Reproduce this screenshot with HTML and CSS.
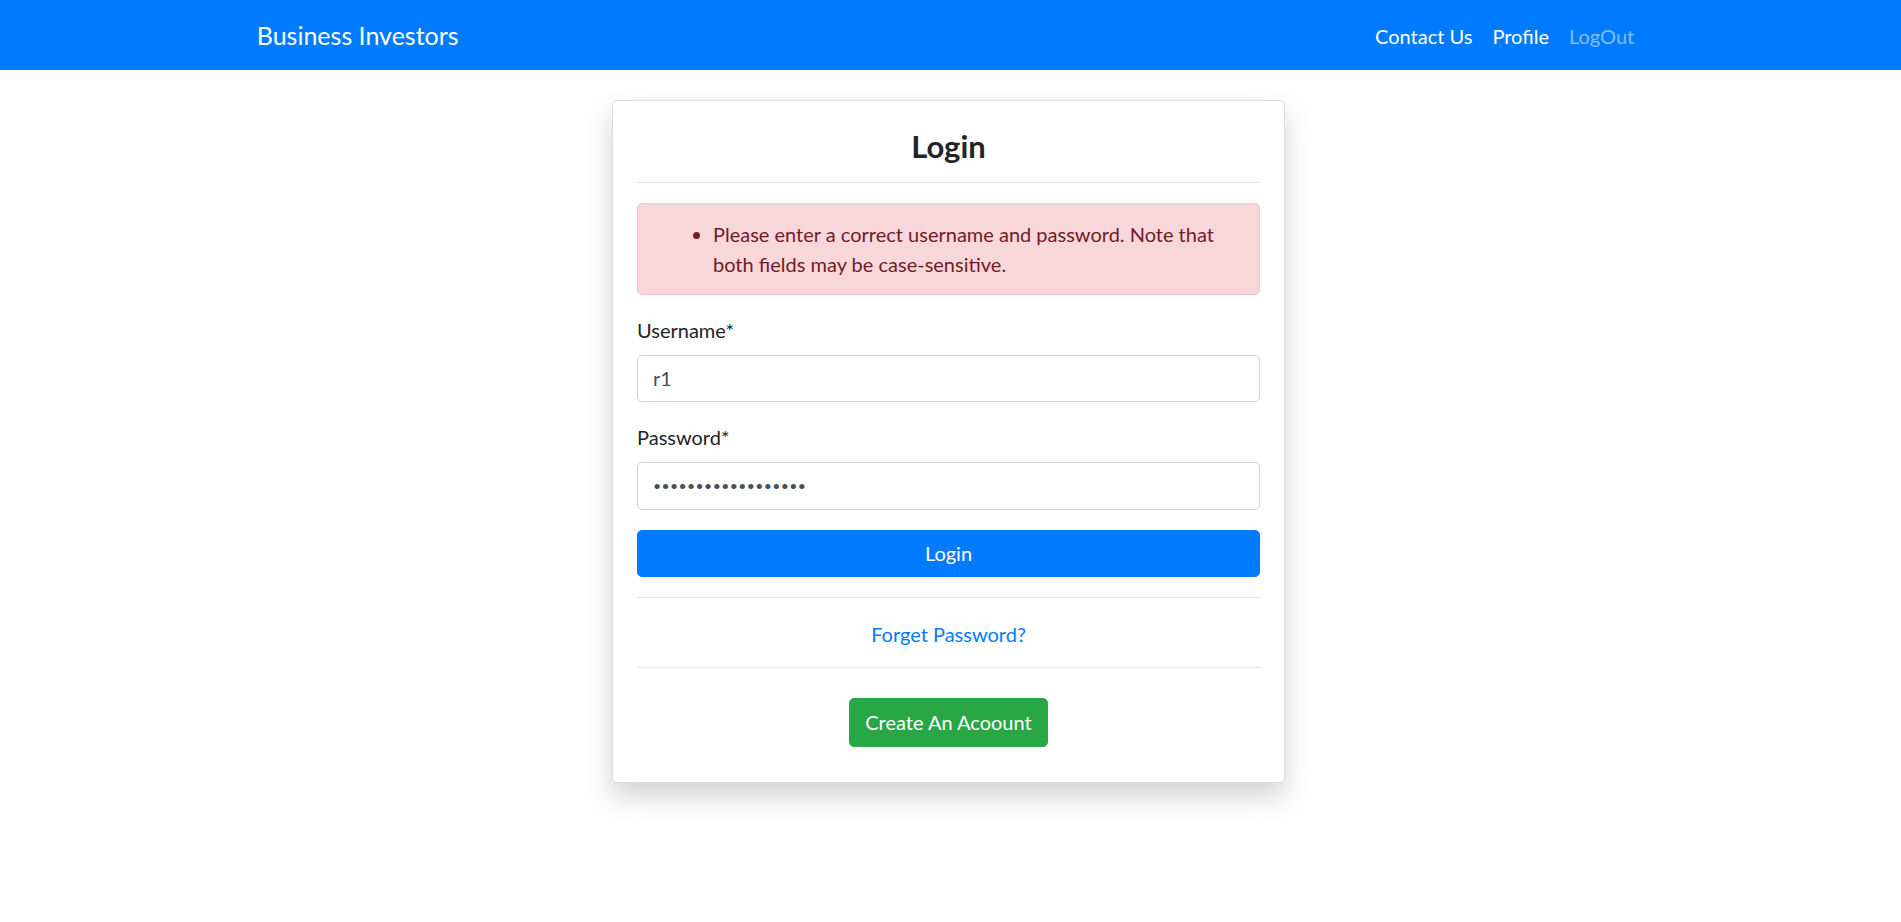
FILE: index.html
```html
<!DOCTYPE html>
<html lang="en">
<head>
<meta charset="utf-8">
<title>Login</title>
<link rel="stylesheet" href="styles.css">
</head>
<body>
<nav class="navbar">
  <div class="nav-container">
    <a class="brand" href="#">Business Investors</a>
    <ul class="nav-links">
      <li><a class="nav-link" href="#">Contact Us</a></li>
      <li><a class="nav-link" href="#">Profile</a></li>
      <li><a class="nav-link nav-link-muted" href="#">LogOut</a></li>
    </ul>
  </div>
</nav>
<main class="page">
  <section class="card">
    <h3 class="card-title">Login</h3>
    <hr class="divider">
    <div class="alert">
      <ul class="alert-list">
        <li>Please enter a correct username and password. Note that both fields may be case-sensitive.</li>
      </ul>
    </div>
    <form class="login-form">
      <div class="form-group">
        <label class="form-label" for="id_username">Username<span class="asterisk">*</span></label>
        <input class="form-control" id="id_username" type="text" value="r1">
      </div>
      <div class="form-group">
        <label class="form-label" for="id_password">Password<span class="asterisk">*</span></label>
        <input class="form-control form-control-password" id="id_password" type="password" value="abcdefghijklmnopqr">
      </div>
      <button class="btn btn-primary btn-block" type="button">Login</button>
    </form>
    <hr class="divider">
    <div class="forgot"><a class="link" href="#">Forget Password?</a></div>
    <hr class="divider">
    <div class="create"><a class="btn btn-success" href="#">Create An Acoount</a></div>
  </section>
</main>
</body>
</html>
```

FILE: styles.css
```css
* { box-sizing: border-box; }
html, body { margin: 0; padding: 0; }
body {
  font-family: Lato, "Noto Sans", sans-serif;
  font-size: 20px;
  line-height: 30px;
  color: #212529;
  background: #fff;
}
.navbar {
  background: #007bff;
  height: 70px;
}
.nav-container {
  width: 1425px;
  margin: 0 auto;
  padding: 2px 18.75px 0;
  height: 70px;
  display: flex;
  align-items: center;
  justify-content: space-between;
}
.brand {
  color: #fff;
  text-decoration: none;
  font-size: 25px;
  line-height: 37.5px;
}
.nav-links {
  list-style: none;
  display: flex;
  margin: 0;
  padding: 0;
}
.nav-link {
  display: block;
  padding: 10px 10px;
  color: #fff;
  text-decoration: none;
}
.nav-link-muted { color: rgba(255,255,255,.5); }
.page {
  display: flex;
  justify-content: center;
  padding: 30px 4px 40px 0;
}
.card {
  width: 673px;
  border: 1px solid #dcdcdc;
  border-radius: 5px;
  background: #fff;
  box-shadow: 0 14px 28px rgba(0,0,0,.18);
  padding: 24px 24px 35.5px;
}
.card-title {
  margin: 0 0 14.5px;
  text-align: center;
  font-size: 31px;
  line-height: 42px;
  font-weight: 700;
}
.divider {
  border: 0;
  border-top: 1px solid #e5e5e5;
  margin: 0 0 20px;
}
.alert {
  background: #f8d7da;
  border: 1px solid #f5c6cb;
  color: #721c24;
  border-radius: 5px;
  padding: 15px 25px;
  margin-bottom: 20px;
}
.alert-list { margin: 0; padding-left: 50px; }
.form-group { margin-bottom: 20px; }
.form-label { display: block; margin-bottom: 10px; }
.form-control {
  display: block;
  width: 100%;
  height: 47.5px;
  padding: 7.5px 15px;
  font: inherit;
  color: #495057;
  border: 1px solid #ced4da;
  border-radius: 5px;
  background: #fff;
}
.form-control-password {
  font-size: 14px;
  letter-spacing: 0.4px;
}
.btn {
  display: inline-block;
  font: inherit;
  color: #fff;
  text-align: center;
  text-decoration: none;
  border: 1px solid transparent;
  border-radius: 5px;
  padding: 7.75px 15px;
  line-height: 30px;
  cursor: pointer;
}
.btn-block { display: block; width: 100%; }
.btn-primary { background: #007bff; border-color: #007bff; }
.btn-success { background: #28a745; border-color: #28a745; padding-top: 8.25px; padding-bottom: 8.25px; }
.login-form { margin-bottom: 19.5px; }
.forgot { text-align: center; padding: 1px 0 18.5px; }
.link { color: #007bff; text-decoration: none; }
.create { text-align: center; padding-top: 10px; }
```
